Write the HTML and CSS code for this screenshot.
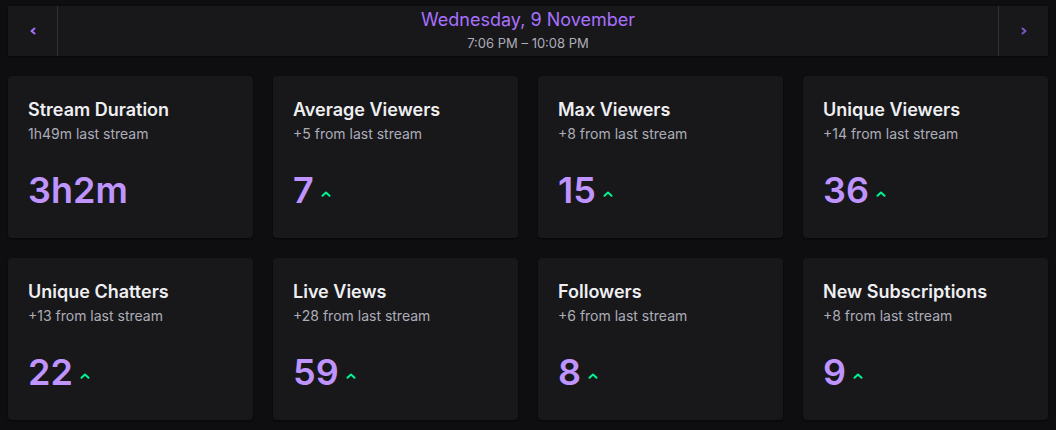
FILE: index.html
```html
<!DOCTYPE html>
<html>
<head>
<meta charset="utf-8">
<link rel="stylesheet" href="styles.css">
</head>
<body>
<div class="page">
  <header class="nav">
    <button class="nav-btn left" aria-label="Previous">
      <svg width="8" height="8" viewBox="0 0 8 8"><path d="M5.5 1.5 L2.5 4 L5.5 6.5" fill="none" stroke="currentColor" stroke-width="2" stroke-linecap="round" stroke-linejoin="round"/></svg>
    </button>
    <div class="nav-center">
      <div class="nav-title">Wednesday, 9 November</div>
      <div class="nav-sub">7:06 PM – 10:08 PM</div>
    </div>
    <button class="nav-btn right" aria-label="Next">
      <svg width="8" height="8" viewBox="0 0 8 8"><path d="M2.5 1.5 L5.5 4 L2.5 6.5" fill="none" stroke="currentColor" stroke-width="2" stroke-linecap="round" stroke-linejoin="round"/></svg>
    </button>
  </header>
  <main class="grid">
    <section class="card">
      <h3 class="card-title">Stream Duration</h3>
      <p class="card-sub">1h49m last stream</p>
      <div class="card-value"><span class="num">3h2m</span></div>
    </section>
    <section class="card">
      <h3 class="card-title">Average Viewers</h3>
      <p class="card-sub">+5 from last stream</p>
      <div class="card-value"><span class="num">7</span><svg class="up" width="10" height="6" viewBox="0 0 10 6"><path d="M1.5 4.8 L5 1.6 L8.5 4.8" fill="none" stroke="currentColor" stroke-width="2" stroke-linecap="round" stroke-linejoin="round"/></svg></div>
    </section>
    <section class="card">
      <h3 class="card-title">Max Viewers</h3>
      <p class="card-sub">+8 from last stream</p>
      <div class="card-value"><span class="num">15</span><svg class="up" width="10" height="6" viewBox="0 0 10 6"><path d="M1.5 4.8 L5 1.6 L8.5 4.8" fill="none" stroke="currentColor" stroke-width="2" stroke-linecap="round" stroke-linejoin="round"/></svg></div>
    </section>
    <section class="card">
      <h3 class="card-title">Unique Viewers</h3>
      <p class="card-sub">+14 from last stream</p>
      <div class="card-value"><span class="num">36</span><svg class="up" width="10" height="6" viewBox="0 0 10 6"><path d="M1.5 4.8 L5 1.6 L8.5 4.8" fill="none" stroke="currentColor" stroke-width="2" stroke-linecap="round" stroke-linejoin="round"/></svg></div>
    </section>
    <section class="card">
      <h3 class="card-title">Unique Chatters</h3>
      <p class="card-sub">+13 from last stream</p>
      <div class="card-value"><span class="num">22</span><svg class="up" width="10" height="6" viewBox="0 0 10 6"><path d="M1.5 4.8 L5 1.6 L8.5 4.8" fill="none" stroke="currentColor" stroke-width="2" stroke-linecap="round" stroke-linejoin="round"/></svg></div>
    </section>
    <section class="card">
      <h3 class="card-title">Live Views</h3>
      <p class="card-sub">+28 from last stream</p>
      <div class="card-value"><span class="num">59</span><svg class="up" width="10" height="6" viewBox="0 0 10 6"><path d="M1.5 4.8 L5 1.6 L8.5 4.8" fill="none" stroke="currentColor" stroke-width="2" stroke-linecap="round" stroke-linejoin="round"/></svg></div>
    </section>
    <section class="card">
      <h3 class="card-title">Followers</h3>
      <p class="card-sub">+6 from last stream</p>
      <div class="card-value"><span class="num">8</span><svg class="up" width="10" height="6" viewBox="0 0 10 6"><path d="M1.5 4.8 L5 1.6 L8.5 4.8" fill="none" stroke="currentColor" stroke-width="2" stroke-linecap="round" stroke-linejoin="round"/></svg></div>
    </section>
    <section class="card">
      <h3 class="card-title">New Subscriptions</h3>
      <p class="card-sub">+8 from last stream</p>
      <div class="card-value"><span class="num">9</span><svg class="up" width="10" height="6" viewBox="0 0 10 6"><path d="M1.5 4.8 L5 1.6 L8.5 4.8" fill="none" stroke="currentColor" stroke-width="2" stroke-linecap="round" stroke-linejoin="round"/></svg></div>
    </section>
  </main>
</div>
</body>
</html>
```
FILE: styles.css
```css
* { box-sizing: border-box; }
html, body {
  margin: 0;
  background: #0e0e10;
  font-family: Inter, "Noto Sans", sans-serif;
  color: #efeff1;
}
.page {
  padding: 6px 8px 10px;
  display: flex;
  flex-direction: column;
  gap: 20px;
}
.nav {
  display: flex;
  height: 50px;
  background: #18181b;
  box-shadow: 0 1px 2px rgba(0,0,0,0.6);
}
.nav-btn {
  width: 50px;
  border: 0;
  background: transparent;
  padding: 0;
  display: flex;
  align-items: center;
  justify-content: center;
  color: #a970ff;
}
.nav-btn.left { border-right: 1px solid #2f2f35; }
.nav-btn.right { border-left: 1px solid #2f2f35; color: #7b56c0; }
.nav-center {
  flex: 1;
  display: flex;
  flex-direction: column;
  align-items: center;
  padding-top: 3px;
}
.nav-title {
  font-size: 18px;
  line-height: 22px;
  color: #a970ff;
}
.nav-sub {
  margin-top: 4px;
  font-size: 13px;
  line-height: 16px;
  color: #adadb8;
}
.grid {
  display: grid;
  grid-template-columns: repeat(4, 1fr);
  gap: 20px;
}
.card {
  height: 162px;
  background: #18181b;
  border-radius: 4px;
  box-shadow: 0 1px 2px rgba(0,0,0,0.6);
  padding: 22px 20px 0;
}
.card-title {
  margin: 0;
  font-size: 18px;
  font-weight: 600;
  line-height: 24px;
  color: #efeff1;
}
.card-sub {
  margin: 3px 0 0;
  font-size: 14px;
  line-height: 18px;
  color: #adadb8;
}
.card-value {
  margin-top: 25px;
  display: flex;
  align-items: center;
  gap: 7px;
  height: 44px;
}
.num {
  font-size: 36px;
  font-weight: 600;
  line-height: 44px;
  color: #bf94ff;
}
.up {
  color: #00f593;
  margin-top: 7px;
}
```
